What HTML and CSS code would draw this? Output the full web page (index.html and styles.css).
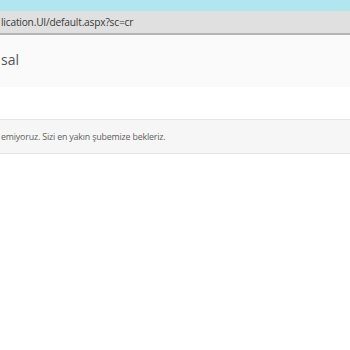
FILE: index.html
```html
<!DOCTYPE html>
<html lang="tr">
<head>
    <meta charset="UTF-8">
    <title>Şube</title>
    <link rel="stylesheet" href="styles.css">
</head>
<body>
    <div class="topbar"></div>
    <div class="addressbar">
        <span class="url">lication.UI/default.aspx?sc=cr</span>
    </div>
    <div class="header">
        <h2 class="title">sal</h2>
    </div>
    <div class="spacer"></div>
    <div class="notice">
        <p>emiyoruz. Sizi en yakın şubemize bekleriz.</p>
    </div>
</body>
</html>
```

FILE: styles.css
```css
body {
    margin: 0;
    padding: 0;
    background-color: #ffffff;
    font-family: "Open Sans", sans-serif;
    overflow: hidden;
}
.topbar {
    height: 11px;
    background-color: #b1e6f0;
}
.addressbar {
    height: 22px;
    padding-left: 1px;
    background-color: #e0e0e0;
    border-bottom: 2px solid #b4b4b4;
    display: flex;
    align-items: center;
    white-space: nowrap;
}
.url {
    font-size: 10.2px;
    letter-spacing: -0.2px;
    color: #3a3a3a;
}
.header {
    height: 52px;
    padding-left: 1px;
    background-color: #fafafa;
    display: flex;
    align-items: center;
}
.title {
    margin: 0 0 4px 0;
    font-size: 14px;
    font-weight: normal;
    color: #555;
}
.spacer {
    height: 32px;
}
.notice {
    height: 33px;
    padding-left: 1px;
    background-color: #f6f6f6;
    border-top: 1px solid #e6e6e6;
    border-bottom: 1px solid #e6e6e6;
    display: flex;
    align-items: center;
}
.notice p {
    margin: 0;
    font-size: 8.8px;
    color: #606060;
    white-space: nowrap;
    letter-spacing: -0.15px;
}
```
